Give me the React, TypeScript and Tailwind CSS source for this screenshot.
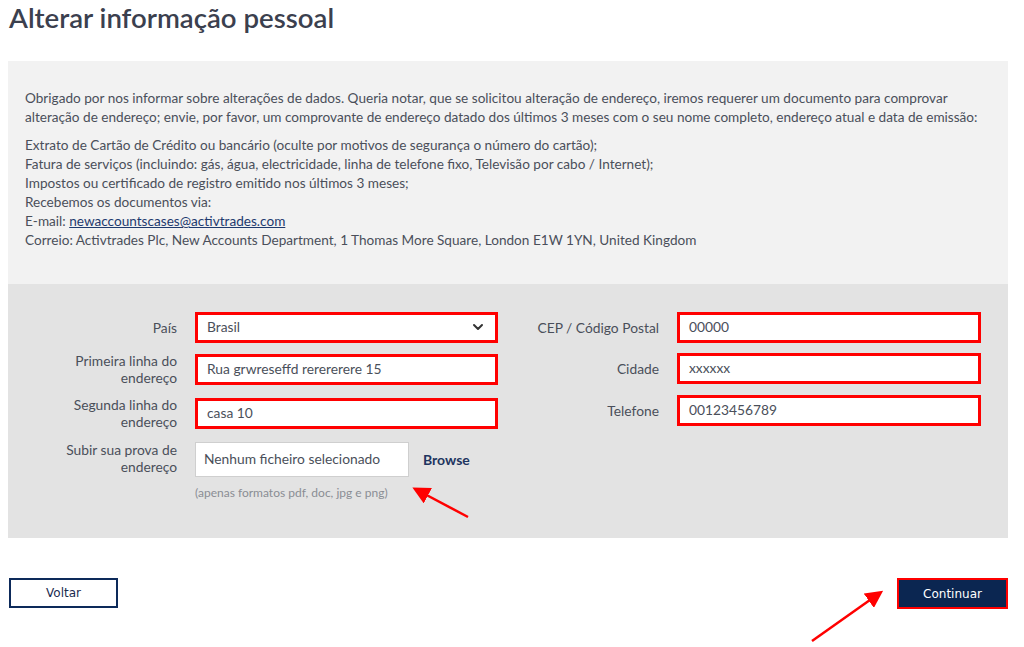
import { ChevronDown } from 'lucide-react'

const inputBox =
  'h-[31px] w-full bg-white border-[3px] border-[#ff0000] px-[9px] flex items-center text-[13.8px] text-[#4a4f5a]'

const Label = ({ children, w }: { children: string; w: string }) => (
  <div className={`${w} shrink-0 flex justify-end`}>
    <div className="max-w-[114px] text-right text-[13.8px] leading-[17px] text-[#4a4f5a]">{children}</div>
  </div>
)

const Field = ({ label, value, select }: { label: string; value: string; select?: boolean }) => (
  <div className="flex items-center">
    <Label w="w-[169px]">{label}</Label>
    <div className="ml-[18px] w-[303px]">
      <div className={inputBox}>
        <span className="flex-1">{value}</span>
        {select && <ChevronDown className="w-4 h-4 text-[#333]" strokeWidth={3} />}
      </div>
    </div>
  </div>
)

const RightField = ({ label, value }: { label: string; value: string }) => (
  <div className="flex items-center">
    <div className="w-[150px] shrink-0 text-right text-[13.8px] leading-[17px] text-[#4a4f5a]">{label}</div>
    <div className="ml-[18px] w-[304px]">
      <div className={inputBox}>{value}</div>
    </div>
  </div>
)

const Arrows = () => (
  <svg className="absolute inset-0 pointer-events-none" width="1024" height="647">
    <defs>
      <marker id="head" markerWidth="7" markerHeight="7" refX="4" refY="3.5" orient="auto">
        <path d="M0,0 L7,3.5 L0,7 z" fill="#ff0000" />
      </marker>
    </defs>
    <line x1="468" y1="517" x2="419" y2="491" stroke="#ff0000" strokeWidth="2.5" markerEnd="url(#head)" />
    <line x1="812" y1="641" x2="877" y2="595" stroke="#ff0000" strokeWidth="2.5" markerEnd="url(#head)" />
  </svg>
)

export default function App() {
  return (
    <div className="relative w-[1024px] h-[647px] bg-white overflow-hidden font-['Lato',sans-serif]">
      <h1 className="h-[61px] pl-[9px] pt-[1px] text-[27.6px] leading-[34px] font-semibold text-[#3b404e]">
        Alterar informação pessoal
      </h1>

      <div className="ml-[8px] w-[1000px]">
        <div className="bg-[#f2f2f2] pt-[28px] pb-[34px] pl-[17px] pr-[24px] text-[13.6px] leading-[19px] text-[#4a4f5a]">
          <p className="mb-[9px]">
            Obrigado por nos informar sobre alterações de dados. Queria notar, que se solicitou alteração de endereço, iremos requerer um documento para comprovar alteração de endereço; envie, por favor, um comprovante de endereço datado dos últimos 3 meses com o seu nome completo, endereço atual e data de emissão:
          </p>
          <p>Extrato de Cartão de Crédito ou bancário (oculte por motivos de segurança o número do cartão);</p>
          <p>Fatura de serviços (incluindo: gás, água, electricidade, linha de telefone fixo, Televisão por cabo / Internet);</p>
          <p>Impostos ou certificado de registro emitido nos últimos 3 meses;</p>
          <p>Recebemos os documentos via:</p>
          <p>
            E-mail: <span className="underline text-[#1e3a6e]">newaccountscases@activtrades.com</span>
          </p>
          <p>Correio: Activtrades Plc, New Accounts Department, 1 Thomas More Square, London E1W 1YN, United Kingdom</p>
        </div>

        <div className="bg-[#e3e3e3] h-[254px] pt-[28px] flex">
          <div className="flex flex-col gap-[10px]">
            <div className="h-[30px] flex items-center">
              <Field label="País" value="Brasil" select />
            </div>
            <div className="h-[34px] flex items-center">
              <Field label="Primeira linha do endereço" value="Rua grwreseffd rerererere 15" />
            </div>
            <div className="h-[34px] flex items-center">
              <Field label="Segunda linha do endereço" value="casa 10" />
            </div>
            <div className="flex items-start">
              <div className="pt-[1px]">
                <Label w="w-[169px]">Subir sua prova de endereço</Label>
              </div>
              <div className="ml-[18px] mt-[2px]">
                <div className="flex items-center">
                  <div className="h-[35px] w-[214px] bg-white border border-[#cfcfcf] flex items-center px-[8px] text-[13.8px] text-[#4a4f5a]">
                    Nenhum ficheiro selecionado
                  </div>
                  <span className="ml-[14px] text-[14px] font-bold text-[#1e3560]">Browse</span>
                </div>
                <div className="mt-[7px] text-[12px] text-[#8a8d94]">(apenas formatos pdf, doc, jpg e png)</div>
              </div>
            </div>
          </div>

          <div className="ml-[11px] flex flex-col gap-[11px]">
            <div className="h-[30px] flex items-center">
              <RightField label="CEP / Código Postal" value="00000" />
            </div>
            <div className="h-[31px] flex items-center">
              <RightField label="Cidade" value="xxxxxx" />
            </div>
            <div className="h-[31px] flex items-center">
              <RightField label="Telefone" value="00123456789" />
            </div>
          </div>
        </div>
      </div>

      <div className="mt-[40px] flex justify-between pl-[9px] pr-[16px] font-['DejaVu_Sans',sans-serif] text-[12px]">
        <button className="h-[30px] w-[109px] border-2 border-[#0d2a5a] bg-white text-[#1a2b4f]">Voltar</button>
        <button className="h-[31px] w-[111px] border-2 border-[#ff0000] bg-[#0b2651] text-white">Continuar</button>
      </div>

      <Arrows />
    </div>
  )
}
